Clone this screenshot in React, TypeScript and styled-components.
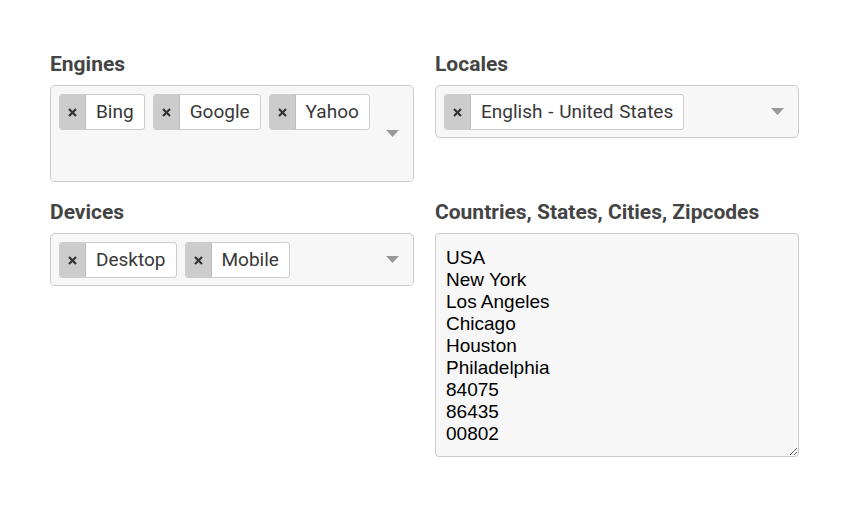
import React from "react";
import styled, { createGlobalStyle } from "styled-components";

const GlobalStyle = createGlobalStyle`
  html, body {
    margin: 0;
    padding: 0;
    background: #ffffff;
  }
  body {
    font-family: Roboto, "Liberation Sans", Arial, sans-serif;
  }
`;

const Page = styled.div`
  display: grid;
  grid-template-columns: 364px 364px;
  column-gap: 21px;
  row-gap: 18px;
  align-items: start;
  padding: 52px 0 0 50px;
`;

const Field = styled.div`
  display: flex;
  flex-direction: column;
`;

const Label = styled.label`
  font-family: Roboto, "Liberation Sans", Arial, sans-serif;
  font-weight: 700;
  font-size: 21px;
  line-height: 24px;
  color: #444444;
  margin-bottom: 9px;
`;

const SelectBox = styled.div`
  display: flex;
  align-items: center;
  background: #f7f7f7;
  border: 1px solid #cccccc;
  border-radius: 5px;
`;

const ChipArea = styled.div`
  flex: 1;
  display: flex;
  flex-wrap: wrap;
  gap: 8px;
  padding: 8px 0 7px 8px;
  min-width: 0;
`;

const Chip = styled.div`
  display: flex;
  height: 36px;
  box-sizing: border-box;
  border: 1px solid #cccccc;
  border-radius: 3px;
  background: #ffffff;
  overflow: hidden;
`;

const ChipRemove = styled.span`
  width: 25px;
  display: flex;
  align-items: center;
  justify-content: center;
  background: #cccccc;
  border-right: 1px solid #bdbdbd;
  color: #333333;
`;

const ChipLabel = styled.span`
  padding: 0 10px;
  font-family: Roboto, "Liberation Sans", Arial, sans-serif;
  font-size: 19px;
  line-height: 34px;
  color: #383838;
  white-space: nowrap;
  word-spacing: 1px;
`;

const SearchInput = styled.input`
  flex: 1;
  min-width: 40px;
  height: 36px;
  border: none;
  background: transparent;
  outline: none;
  padding: 0;
  font-size: 19px;
`;

const ArrowWrap = styled.span`
  flex: none;
  display: flex;
  margin: 0 14px 0 8px;
`;

const TextArea = styled.textarea`
  width: 364px;
  height: 224px;
  box-sizing: border-box;
  margin: 0;
  padding: 13px 10px 10px;
  background: #f7f7f7;
  border: 1px solid #cccccc;
  border-radius: 4px;
  font-family: "Liberation Sans", Arial, sans-serif;
  font-size: 19px;
  line-height: 22px;
  color: #000000;
  outline: none;
`;

const RemoveIcon = () => (
  <svg width="9" height="9" viewBox="0 0 9 9">
    <path d="M1 1 L8 8 M8 1 L1 8" stroke="#333" strokeWidth="2.2" strokeLinecap="butt" />
  </svg>
);

const Arrow = () => (
  <ArrowWrap>
    <svg width="13" height="7" viewBox="0 0 13 7">
      <path d="M0 0 H13 L6.5 7 Z" fill="#999999" />
    </svg>
  </ArrowWrap>
);

const MultiSelect = ({ items }: { items: string[] }) => (
  <SelectBox>
    <ChipArea>
      {items.map((item) => (
        <Chip key={item}>
          <ChipRemove>
            <RemoveIcon />
          </ChipRemove>
          <ChipLabel>{item}</ChipLabel>
        </Chip>
      ))}
      <SearchInput aria-label="search" />
    </ChipArea>
    <Arrow />
  </SelectBox>
);

const places = [
  "USA",
  "New York",
  "Los Angeles",
  "Chicago",
  "Houston",
  "Philadelphia",
  "84075",
  "86435",
  "00802",
].join("\n");

export default function App() {
  return (
    <>
      <GlobalStyle />
      <Page>
        <Field>
          <Label>Engines</Label>
          <MultiSelect items={["Bing", "Google", "Yahoo"]} />
        </Field>
        <Field>
          <Label>Locales</Label>
          <MultiSelect items={["English - United States"]} />
        </Field>
        <Field>
          <Label>Devices</Label>
          <MultiSelect items={["Desktop", "Mobile"]} />
        </Field>
        <Field>
          <Label>Countries, States, Cities, Zipcodes</Label>
          <TextArea defaultValue={places} />
        </Field>
      </Page>
    </>
  );
}
